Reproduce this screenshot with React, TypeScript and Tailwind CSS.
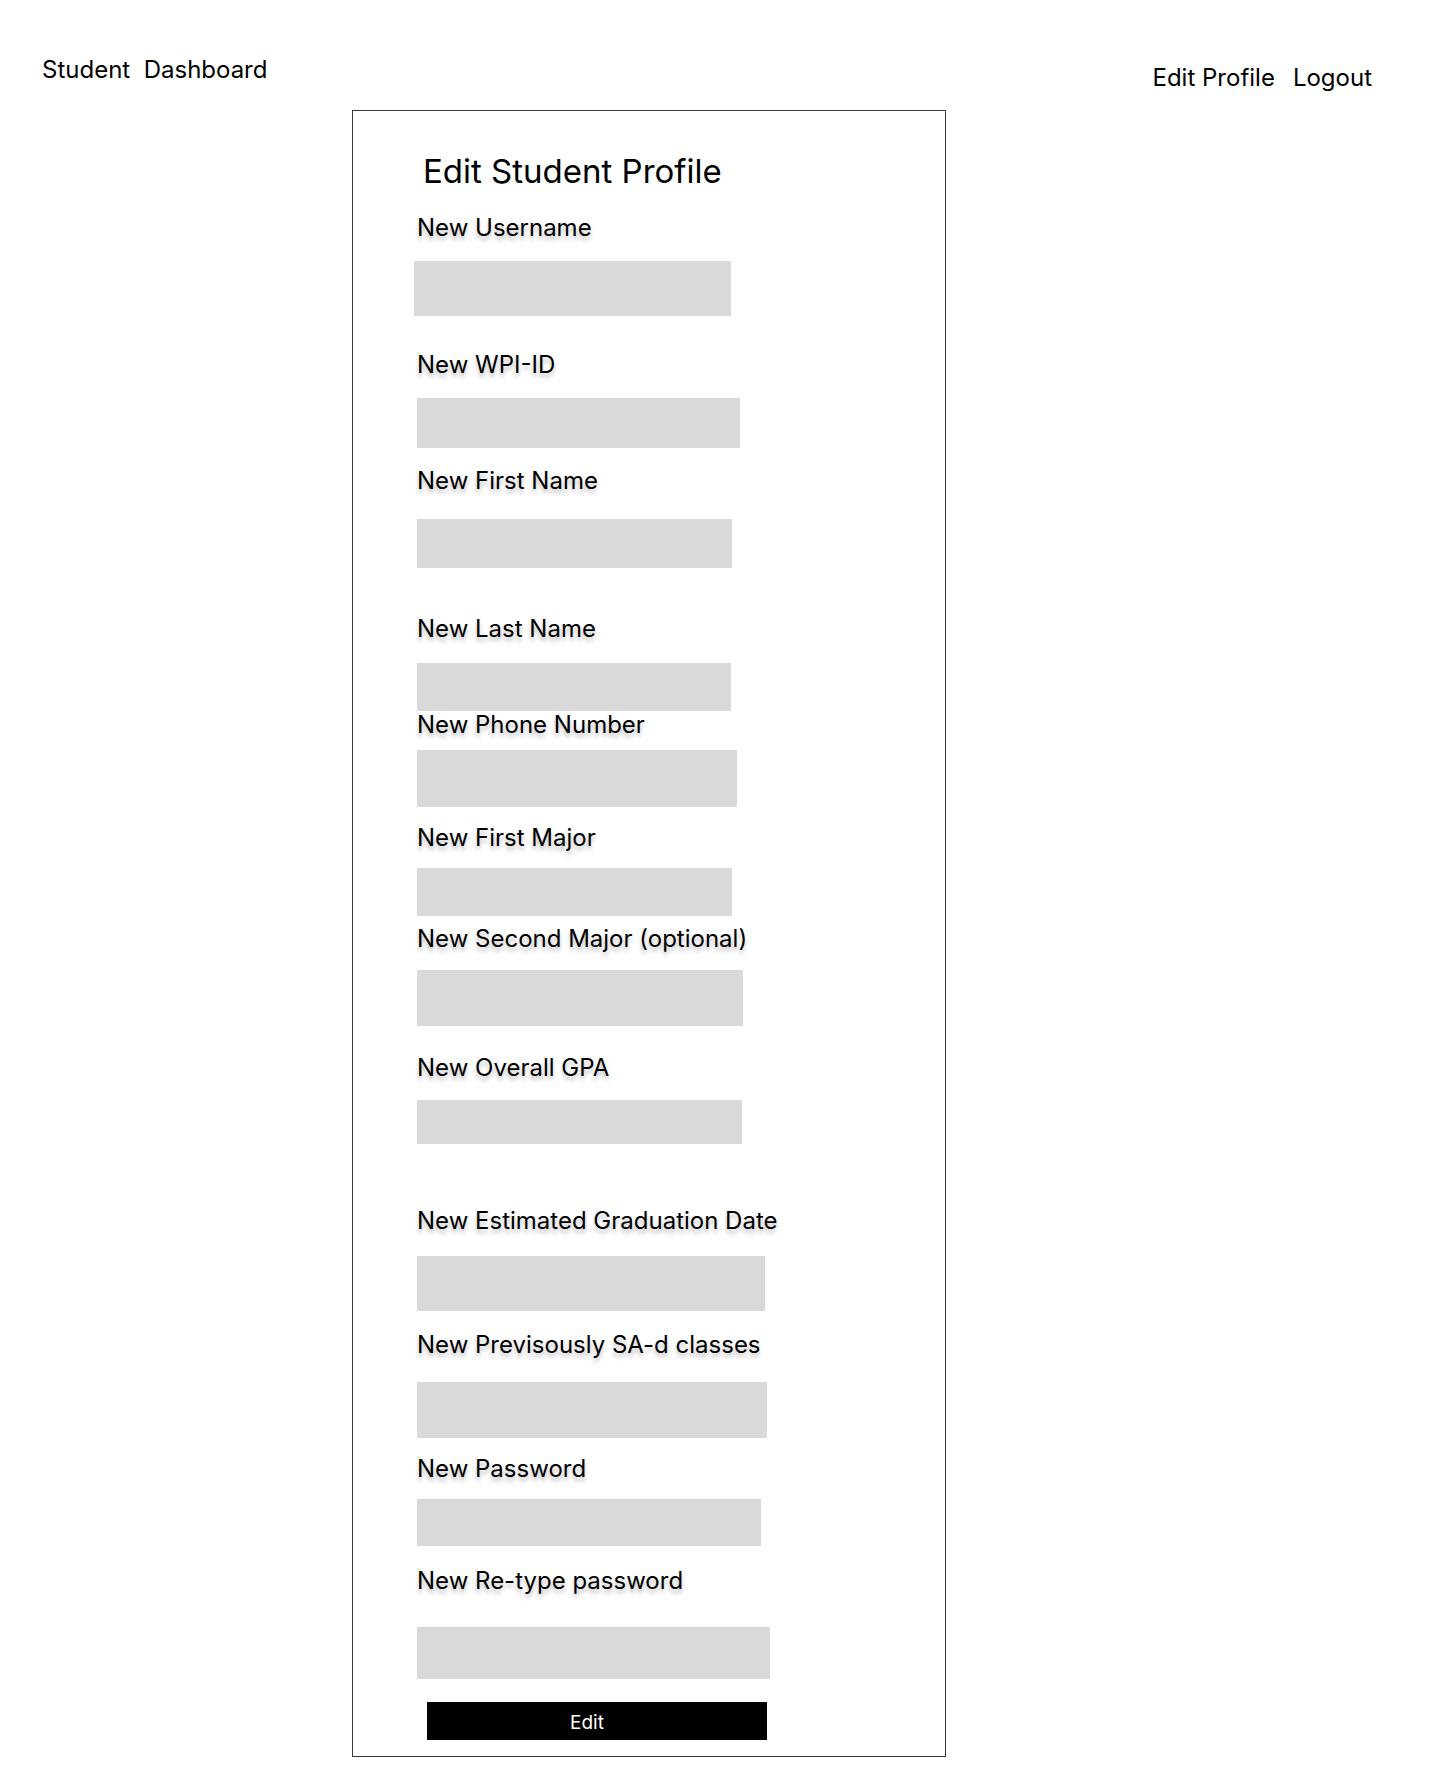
import React from "react";

type Field = {
  label: string;
  labelCls: string;
  inputCls: string;
};

const fields: Field[] = [
  { label: "New Username", labelCls: "mt-[23px]", inputCls: "mt-[20px] -ml-[3px] w-[317px] h-[55px]" },
  { label: "New WPI-ID", labelCls: "mt-[35px]", inputCls: "mt-[20px] w-[323px] h-[50px]" },
  { label: "New First Name", labelCls: "mt-[19px]", inputCls: "mt-[25px] w-[315px] h-[49px]" },
  { label: "New Last Name", labelCls: "mt-[47px]", inputCls: "mt-[21px] w-[314px] h-[48px]" },
  { label: "New Phone Number", labelCls: "mt-[0px]", inputCls: "mt-[12px] w-[320px] h-[57px]" },
  { label: "New First Major", labelCls: "mt-[17px]", inputCls: "mt-[17px] w-[315px] h-[48px]" },
  { label: "New Second Major (optional)", labelCls: "mt-[9px]", inputCls: "mt-[18px] w-[326px] h-[56px]" },
  { label: "New Overall GPA", labelCls: "mt-[28px]", inputCls: "mt-[19px] w-[325px] h-[44px]" },
  { label: "New Estimated Graduation Date", labelCls: "mt-[63px]", inputCls: "mt-[22px] w-[348px] h-[55px]" },
  { label: "New Previsously SA-d classes", labelCls: "mt-[20px]", inputCls: "mt-[24px] w-[350px] h-[56px]" },
  { label: "New Password", labelCls: "mt-[17px]", inputCls: "mt-[17px] w-[344px] h-[47px]" },
  { label: "New Re-type password", labelCls: "mt-[21px]", inputCls: "mt-[33px] w-[353px] h-[52px]" },
];

export default function App() {
  return (
    <div
      className="w-[1440px] min-h-[1788px] bg-white text-black"
      style={{ fontFamily: "Inter, 'Noto Sans', 'Liberation Sans', sans-serif" }}
    >
      <header className="flex h-[110px] items-start justify-between pl-[42px] pr-[68px]">
        <div className="mt-[56px] whitespace-pre text-[24px] leading-[28px]">Student  Dashboard</div>
        <nav className="mt-[64px] flex gap-[18px] text-[24px] leading-[28px]">
          <span>Edit Profile</span>
          <span>Logout</span>
        </nav>
      </header>

      <main className="ml-[352px] flex h-[1647px] w-[594px] flex-col border border-[#3a3a3a] pl-[64px]">
        <h1 className="mt-[41px] pl-[6px] text-[33px] font-normal leading-[39px]">Edit Student Profile</h1>
        {fields.map((f) => (
          <React.Fragment key={f.label}>
            <label className={`${f.labelCls} block text-[24px] leading-[27px] [text-shadow:0px_4px_4px_rgba(0,0,0,0.25)]`}>
              {f.label}
            </label>
            <div className={`${f.inputCls} shrink-0 bg-[#d9d9d9]`} />
          </React.Fragment>
        ))}
        <button className="mt-[23px] ml-[10px] flex h-[38px] w-[340px] shrink-0 items-center justify-center bg-black pt-[3px] pr-[20px] text-[19px] leading-[24px] text-white">
          Edit
        </button>
      </main>
    </div>
  );
}
